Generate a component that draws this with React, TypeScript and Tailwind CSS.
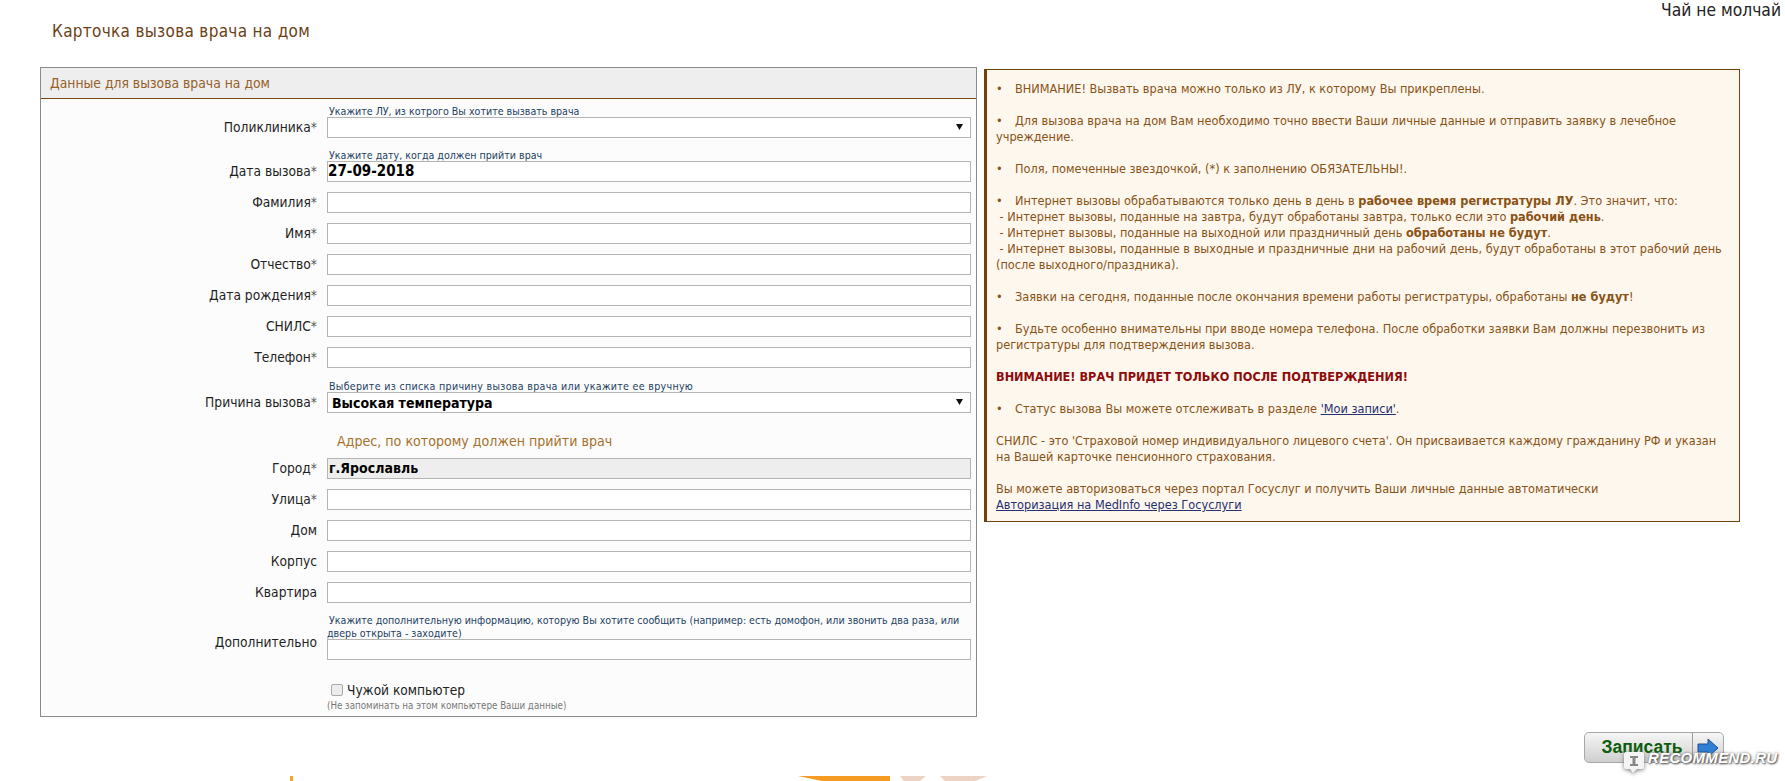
import type { ReactNode } from "react";

const inputClass =
  "block w-full h-[21px] border border-[#b4b4b4] px-[1px] text-[14px] font-bold text-black outline-none";

function Row({
  label,
  hint,
  star = true,
  className = "mt-[10px]",
  labelClass = "self-center",
  children,
}: {
  label: string;
  hint?: ReactNode;
  star?: boolean;
  className?: string;
  labelClass?: string;
  children?: ReactNode;
}) {
  return (
    <div className={`grid grid-cols-[276px_644px] gap-x-[10px] ${className}`}>
      {hint && <div className="col-start-2 text-[10.6px] leading-[12px] text-[#1d3f63]">{hint}</div>}
      <label className={`col-start-1 text-right text-[13.7px] leading-[21px] text-[#1f1f1f] ${labelClass}`}>
        {label}
        {star && <span className="text-[#555]">*</span>}
      </label>
      <div className="col-start-2">{children ?? <input className={`${inputClass} bg-white`} />}</div>
    </div>
  );
}

function Select({ value, options }: { value: string; options: string[] }) {
  return (
    <div className="relative">
      <select defaultValue={value} className={`${inputClass} appearance-none bg-white pl-[4px]`}>
        {options.map((o) => (
          <option key={o}>{o}</option>
        ))}
      </select>
      <svg className="absolute right-[8px] top-[7px] h-[6px] w-[7px]" viewBox="0 0 7 6">
        <path d="M0 0h7L3.5 6z" fill="#111" />
      </svg>
    </div>
  );
}

function Bullet() {
  return <span className="inline-block w-[19px]">•</span>;
}

function Notes() {
  return (
    <div className="mt-[2px] h-[453px] w-[756px] border border-l-[3px] border-[#6f430f] bg-[#fdf7ee] pl-[9px] pr-[12px] pt-[11px] text-[12.6px] leading-[16px] text-[#8a5214]">
      <p className="mb-[16px]">
        <Bullet />
        ВНИМАНИЕ! Вызвать врача можно только из ЛУ, к которому Вы прикреплены.
      </p>
      <p className="mb-[16px]">
        <Bullet />
        Для вызова врача на дом Вам необходимо точно ввести Ваши личные данные и отправить заявку в лечебное учреждение.
      </p>
      <p className="mb-[16px]">
        <Bullet />
        Поля, помеченные звездочкой, (*) к заполнению ОБЯЗАТЕЛЬНЫ!.
      </p>
      <p className="mb-[16px]">
        <Bullet />
        Интернет вызовы обрабатываются только день в день в <b>рабочее время регистратуры ЛУ</b>. Это значит, что:
        <br />
        &nbsp;- Интернет вызовы, поданные на завтра, будут обработаны завтра, только если это <b>рабочий день</b>.
        <br />
        &nbsp;- Интернет вызовы, поданные на выходной или праздничный день <b>обработаны не будут</b>.
        <br />
        &nbsp;- Интернет вызовы, поданные в выходные и праздничные дни на рабочий день, будут обработаны в этот рабочий день
        (после выходного/праздника).
      </p>
      <p className="mb-[16px]">
        <Bullet />
        Заявки на сегодня, поданные после окончания времени работы регистратуры, обработаны <b>не будут</b>!
      </p>
      <p className="mb-[16px]">
        <Bullet />
        Будьте особенно внимательны при вводе номера телефона. После обработки заявки Вам должны перезвонить из
        регистратуры для подтверждения вызова.
      </p>
      <p className="mb-[16px] font-bold text-[#8f0a0a]">ВНИМАНИЕ! ВРАЧ ПРИДЕТ ТОЛЬКО ПОСЛЕ ПОДТВЕРЖДЕНИЯ!</p>
      <p className="mb-[16px]">
        <Bullet />
        Статус вызова Вы можете отслеживать в разделе{" "}
        <a href="#" className="text-[#27306f] underline">
          'Мои записи'
        </a>
        .
      </p>
      <p className="mb-[16px]">
        СНИЛС - это 'Страховой номер индивидуального лицевого счета'. Он присваивается каждому гражданину РФ и указан на
        Вашей карточке пенсионного страхования.
      </p>
      <p>
        Вы можете авторизоваться через портал Госуслуг и получить Ваши личные данные автоматически
        <br />
        <a href="#" className="text-[#27306f] underline">
          Авторизация на MedInfo через Госуслуги
        </a>
      </p>
    </div>
  );
}

export default function App() {
  return (
    <div className="relative h-[781px] w-[1785px] overflow-hidden bg-white font-['DejaVu_Sans_Condensed','DejaVu_Sans',sans-serif]">
      <header className="flex h-[67px] justify-between">
        <h1 className="ml-[52px] mt-[21px] text-[17px] font-normal leading-[20px] tracking-[0.3px] text-[#6b4216]">
          Карточка вызова врача на дом
        </h1>
        <div className="mr-[4px] mt-[0px] text-[17.3px] leading-[20px] text-[#222]">Чай не молчай</div>
      </header>

      <main className="flex items-start gap-[7px] pl-[40px]">
        <section className="h-[650px] w-[937px] border border-[#8a8a8a] bg-[#fcfcfc]">
          <div className="h-[31px] border-b border-[#7a4a16] bg-[#eeeeee] pl-[9px] text-[13.8px] leading-[30px] text-[#96602a]">
            Данные для вызова врача на дом
          </div>
          <div className="pt-[6px]">
            <Row label="Поликлиника" className="mt-0" hint={<span className="pl-[2px]">Укажите ЛУ, из котрого Вы хотите вызвать врача</span>}>
              <Select value="" options={[""]} />
            </Row>
            <Row label="Дата вызова" className="mt-[11px]" hint={<span className="pl-[2px]">Укажите дату, когда должен прийти врач</span>}>
              <input className={`${inputClass} bg-white !px-0 text-[15px]`} defaultValue="27-09-2018" />
            </Row>
            <Row label="Фамилия" />
            <Row label="Имя" />
            <Row label="Отчество" />
            <Row label="Дата рождения" />
            <Row label="СНИЛС" />
            <Row label="Телефон" />
            <Row
              label="Причина вызова"
              className="mt-[12px]"
              hint={<span className="pl-[2px] tracking-[0.3px]">Выберите из списка причину вызова врача или укажите ее вручную</span>}
            >
              <Select value="Высокая температура" options={["Высокая температура"]} />
            </Row>
            <div className="ml-[296px] mt-[18px] h-[27px] text-[14.1px] leading-[20px] text-[#a5702a]">
              Адрес, по которому должен прийти врач
            </div>
            <Row label="Город" className="mt-0">
              <input className={`${inputClass} bg-[#eeeeee]`} defaultValue="г.Ярославль" readOnly />
            </Row>
            <Row label="Улица" />
            <Row label="Дом" star={false} />
            <Row label="Корпус" star={false} />
            <Row label="Квартира" star={false} />
            <Row
              label="Дополнительно"
              star={false}
              className="mt-[11px]"
              labelClass="self-start -mt-[7px]"
              hint={
                <div className="-mb-[1px] leading-[13px]">
                  <span className="pl-[2px]">
                    Укажите дополнительную информацию, которую Вы хотите сообщить (например: есть домофон, или звонить два раза, или
                  </span>{" "}
                  дверь открыта - заходите)
                </div>
              }
            />
            <div className="ml-[286px] mt-[22px]">
              <label className="flex h-[16px] items-center pl-[4px] text-[13.6px] leading-[16px] text-[#222]">
                <input
                  type="checkbox"
                  className="mr-[4px] h-[12px] w-[12px] appearance-none rounded-[2px] border border-[#a9a9a9] bg-[#ececec]"
                />
                Чужой компьютер
              </label>
              <div className="mt-[2px] text-[9.7px] leading-[12px] text-[#777]">(Не запоминать на этом компьютере Ваши данные)</div>
            </div>
          </div>
        </section>
        <Notes />
      </main>

      <button className="absolute left-[1584px] top-[732px] flex h-[31px] w-[140px] items-stretch rounded-[5px] border border-[#a8a8a8] bg-gradient-to-b from-[#f6f6f6] to-[#cfcfcf] font-['Liberation_Sans',sans-serif] text-[17.5px] font-bold text-[#0b5d0b]">
        <span className="flex w-[108px] items-center justify-center border-r border-[#9a9a9a] pl-[7px]">Записать</span>
        <span className="flex flex-1 items-center justify-center">
          <svg width="22" height="20" viewBox="0 0 22 20">
            <path d="M1 6h10V1l10 9-10 9v-5H1z" fill="#2f7fd6" stroke="#1d4f96" />
          </svg>
        </span>
      </button>

      <div className="absolute left-[1623px] top-[751px] flex items-start gap-[3px] font-['Liberation_Sans',sans-serif]">
        <svg className="drop-shadow-[0_1px_2px_#777]" width="22" height="23" viewBox="0 0 22 23">
          <path d="M3 1h16a2 2 0 0 1 2 2v13a2 2 0 0 1-2 2h-5l-4 4-3-4H3a2 2 0 0 1-2-2V3a2 2 0 0 1 2-2z" fill="#f4f4f4" />
          <path d="M7 5h8v2h-2.500v6H15v2H7v-2h2.500V7H7z" fill="#888" />
        </svg>
        <span className="text-[15px] font-bold italic leading-[14px] tracking-[0.3px] text-white [text-shadow:1px_1px_2px_#555,0_0_3px_#777]">
          RECOMMEND.RU
        </span>
      </div>

      <svg className="absolute left-[290px] top-[776px]" width="700" height="5" viewBox="0 0 700 5">
        <rect width="3" height="5" fill="#f5a623" />
        <path d="M508 0h92v5h-68z" fill="#f59a23" />
        <path d="M610 0h26l-6 5h-16zM650 0h47l-12 5h-30z" fill="#ecd3c3" />
      </svg>
    </div>
  );
}
